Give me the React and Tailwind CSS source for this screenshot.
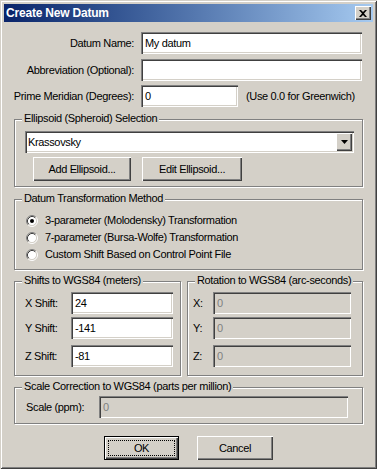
const sunken =
  "shadow-[inset_1px_1px_0_#808080,inset_2px_2px_0_#404040,inset_-1px_-1px_0_#ffffff,inset_-2px_-2px_0_#d4d0c8]";
const raised =
  "shadow-[inset_1px_1px_0_#ffffff,inset_-1px_-1px_0_#404040,inset_-2px_-2px_0_#808080]";

const Edit = ({ className, value, disabled }) => (
  <div
    className={`h-[22px] flex items-center pl-[4px] pt-[1px] ${sunken} ${
      disabled ? "bg-[#d4d0c8] text-[#808080]" : "bg-white text-black"
    } ${className}`}
  >
    {value}
  </div>
);

const Group = ({ title, className, children }) => (
  <div
    className={`relative border border-[#808080] shadow-[1px_1px_0_#ffffff,inset_1px_1px_0_#ffffff] ${className}`}
  >
    <span className="absolute -top-[8px] left-[7px] bg-[#d4d0c8] px-[2px] leading-[13px] whitespace-nowrap">
      {title}
    </span>
    {children}
  </div>
);

const Button = ({ className, children }) => (
  <div
    className={`h-[24px] flex items-center justify-center bg-[#d4d0c8] ${raised} ${className}`}
  >
    {children}
  </div>
);

const Radio = ({ checked, label }) => (
  <div className="h-[17px] flex items-center">
    <svg width="12" height="12" viewBox="0 0 12 12" className="shrink-0">
      <circle cx="6" cy="6" r="4.5" fill="#ffffff" />
      <path d="M2.11 9.89 A5.5 5.5 0 0 1 9.89 2.11" fill="none" stroke="#808080" />
      <path d="M9.89 2.11 A5.5 5.5 0 0 1 2.11 9.89" fill="none" stroke="#ffffff" />
      <path d="M2.82 9.18 A4.5 4.5 0 0 1 9.18 2.82" fill="none" stroke="#404040" />
      <path d="M9.18 2.82 A4.5 4.5 0 0 1 2.82 9.18" fill="none" stroke="#d4d0c8" />
      {checked && <circle cx="6" cy="6" r="2" fill="#000000" />}
    </svg>
    <span className="ml-[7px]">{label}</span>
  </div>
);

export default function App() {
  return (
    <div className="w-[377px] h-[469px] bg-[#d4d0c8] p-[4px] text-[11px] tracking-[-0.35px] leading-[13px] text-black font-['Liberation_Sans',Arial,sans-serif] shadow-[inset_1px_1px_0_#d4d0c8,inset_-1px_-1px_0_#404040,inset_2px_2px_0_#ffffff,inset_-2px_-2px_0_#808080] overflow-hidden">
      {/* title bar */}
      <div className="h-[18px] flex items-center justify-between bg-gradient-to-r from-[#0a246a] to-[#a6caf0] pl-[2px] pr-[2px]">
        <span className="text-white font-bold text-[12px] tracking-[-0.2px]">Create New Datum</span>
        <div className={`w-[16px] h-[14px] bg-[#d4d0c8] flex items-center justify-center ${raised}`}>
          <svg width="8" height="7" viewBox="0 0 8 7">
            <path d="M0 0 L2 0 L4 2 L6 0 L8 0 L5 3.5 L8 7 L6 7 L4 5 L2 7 L0 7 L3 3.5 Z" fill="#000" />
          </svg>
        </div>
      </div>

      {/* body */}
      <div className="flex flex-col">
        <div className="flex items-center mt-[10px]">
          <div className="w-[130px] text-right">Datum Name:</div>
          <Edit className="ml-[7px] w-[221px]" value="My datum" />
        </div>
        <div className="flex items-center mt-[5px]">
          <div className="w-[130px] text-right">Abbreviation (Optional):</div>
          <Edit className="ml-[7px] w-[221px]" value="" />
        </div>
        <div className="flex items-center mt-[4px]">
          <div className="w-[130px] text-right">Prime Meridian (Degrees):</div>
          <Edit className="ml-[7px] w-[97px]" value="0" />
          <span className="ml-[8px]">(Use 0.0 for Greenwich)</span>
        </div>

        <Group title="Ellipsoid (Spheroid) Selection" className="ml-[10px] mt-[12px] w-[349px] h-[68px] pt-[11px] pl-[10px]">
          <div className={`relative w-[329px] h-[22px] bg-white flex items-center pl-[3px] pt-[1px] ${sunken}`}>
            Krassovsky
            <div className={`absolute right-[2px] top-[2px] w-[16px] h-[18px] bg-[#d4d0c8] flex items-center justify-center ${raised}`}>
              <svg width="7" height="4" viewBox="0 0 7 4">
                <path d="M0 0 H7 L3.5 4 Z" fill="#000" />
              </svg>
            </div>
          </div>
          <div className="flex mt-[4px] ml-[8px]">
            <Button className="w-[98px]">Add Ellipsoid...</Button>
            <Button className="w-[100px] ml-[11px]">Edit Ellipsoid...</Button>
          </div>
        </Group>

        <Group title="Datum Transformation Method" className="ml-[10px] mt-[12px] w-[349px] h-[71px] pt-[12px] pl-[11px]">
          <Radio checked label="3-parameter (Molodensky) Transformation" />
          <Radio label="7-parameter (Bursa-Wolfe) Transformation" />
          <Radio label="Custom Shift Based on Control Point File" />
        </Group>

        <div className="flex ml-[10px] mt-[11px]">
          <Group title="Shifts to WGS84 (meters)" className="w-[167px] h-[95px] pt-[10px] pl-[10px]">
            {[
              ["X Shift:", "24", 0],
              ["Y Shift:", "-141", 3],
              ["Z Shift:", "-81", 6],
            ].map(([l, v, m]) => (
              <div key={l} className="flex items-center" style={{ marginTop: m }}>
                <div className="w-[46px]">{l}</div>
                <Edit className="w-[102px] pl-[3px]" value={v} />
              </div>
            ))}
          </Group>
          <Group title="Rotation to WGS84 (arc-seconds)" className="ml-[6px] w-[176px] h-[95px] pt-[10px] pl-[5px]">
            {[
              ["X:", 0],
              ["Y:", 3],
              ["Z:", 6],
            ].map(([l, m]) => (
              <div key={l} className="flex items-center" style={{ marginTop: m }}>
                <div className="w-[20px]">{l}</div>
                <Edit className="w-[138px] pl-[3px]" value="0" disabled />
              </div>
            ))}
          </Group>
        </div>

        <Group title="Scale Correction to WGS84 (parts per million)" className="ml-[10px] mt-[11px] w-[349px] h-[37px] pt-[8px] pl-[11px]">
          <div className="flex items-center">
            <div className="w-[73px]">Scale (ppm):</div>
            <Edit className="w-[249px] pl-[3px]" value="0" disabled />
          </div>
        </Group>

        <div className="flex mt-[12px] ml-[100px]">
          <div className="w-[75px] h-[24px] border border-black">
            <div className={`w-full h-full bg-[#d4d0c8] p-[3px] ${raised}`}>
              <div className="w-full h-full border border-dotted border-black flex items-center justify-center">
                OK
              </div>
            </div>
          </div>
          <Button className="w-[76px] ml-[18px]">Cancel</Button>
        </div>
      </div>
    </div>
  );
}
